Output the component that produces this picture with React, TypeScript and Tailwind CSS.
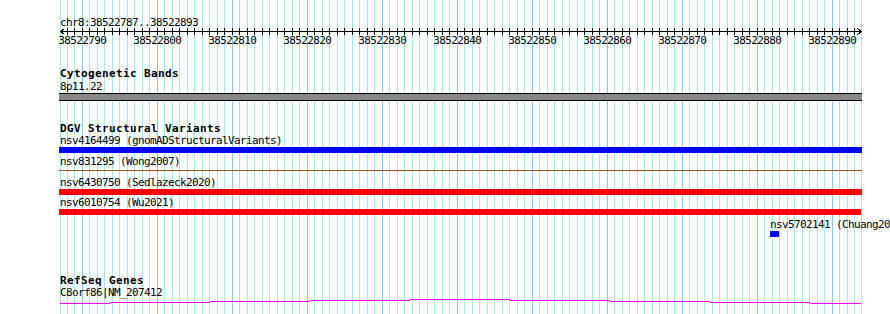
import React from "react";

const row =
  "h-[11px] leading-[11px] text-[11px] tracking-[-0.62px] whitespace-nowrap";
const title =
  "h-[11px] leading-[11px] text-[11px] font-bold tracking-[0.38px] whitespace-nowrap";

function gx(k: number): number {
  if (k === 0) return 60;
  if (k === 107) return 861;
  return Math.floor(59.5 + 7.5 * k);
}

const START = 38522787;

export default function App() {
  const ks = Array.from({ length: 108 }, (_, k) => k);
  const labels = Array.from({ length: 11 }, (_, i) => 38522790 + i * 10);
  const magenta: [number, number, number][] = [
    [60, 110, 5],
    [110, 210, 4],
    [210, 310, 3],
    [310, 410, 2],
    [410, 510, 1],
    [510, 610, 2],
    [610, 710, 3],
    [710, 810, 4],
    [810, 861, 5],
  ];
  return (
    <div className="relative w-[890px] h-[314px] overflow-hidden bg-white text-black font-['DejaVu_Sans_Mono',monospace]">
      <svg
        className="absolute inset-0"
        width={890}
        height={314}
        shapeRendering="crispEdges"
      >
        {ks.map((k) => (
          <rect
            key={k}
            x={gx(k)}
            y={0}
            width={1}
            height={314}
            fill={(k - 3) % 10 === 0 ? "#88c6e8" : "#a8e6ee"}
          />
        ))}
      </svg>

      <div className="relative flex flex-col pt-[17px]">
        <div className={row + " ml-[60px]"}>chr8:38522787..38522893</div>

        <svg width={890} height={19} className="block overflow-visible">
          <rect x={60} y={3} width={801} height={1} fill="#000" shapeRendering="crispEdges" />
          {ks.slice(1, 107).map((k) => (
            <rect
              key={k}
              x={gx(k)}
              y={0}
              width={1}
              height={7}
              fill="#000"
              shapeRendering="crispEdges"
            />
          ))}
          <path
            d="M64.5 0.5 L60.5 3.5 L64.5 6.5"
            stroke="#000"
            fill="none"
            strokeWidth={1}
            shapeRendering="crispEdges"
          />
          <path
            d="M857.5 0.5 L861.5 3.5 L857.5 6.5"
            stroke="#000"
            fill="none"
            strokeWidth={1}
            shapeRendering="crispEdges"
          />
          {labels.map((b) => (
            <text
              key={b}
              x={gx(b - START) + 0.2}
              y={16}
              textAnchor="middle"
              fontFamily="DejaVu Sans Mono, monospace"
              fontSize={11}
              letterSpacing={-0.62}
              fill="#000"
            >
              {b}
            </text>
          ))}
        </svg>

        <div className={title + " ml-[60px] mt-[21px]"}>Cytogenetic Bands</div>
        <div className={row + " ml-[60px] mt-[2px]"}>8p11.22</div>
        <div className="ml-[59px] mt-[1px] w-[803px] h-[8px] bg-[#888888] border-y border-black" />

        <div className={title + " ml-[60px] mt-[22px]"}>DGV Structural Variants</div>
        <div className={row + " ml-[60px] mt-[1px]"}>
          nsv4164499 (gnomADStructuralVariants)
        </div>
        <div className="ml-[59px] mt-[1px] w-[803px] h-[6px] bg-[#0000ff]" />
        <div className={row + " ml-[60px] mt-[3px]"}>nsv831295 (Wong2007)</div>
        <div className="ml-[59px] mt-[3px] w-[803px] h-[1px] bg-[#a0522d]" />
        <div className={row + " ml-[60px] mt-[6px]"}>nsv6430750 (Sedlazeck2020)</div>
        <div className="ml-[59px] mt-[1px] w-[803px] h-[6px] bg-[#ff0000]" />
        <div className={row + " ml-[60px] mt-[2px]"}>nsv6010754 (Wu2021)</div>
        <div className="ml-[59px] mt-[1px] w-[802px] h-[6px] bg-[#ff0000]" />
        <div className={row + " ml-[770px] mt-[4px]"}>nsv5702141 (Chuang20</div>
        <div className="ml-[770px] mt-[1px] w-[9px] h-[6px] bg-[#0000ff]" />

        <div className={title + " ml-[60px] mt-[38px]"}>RefSeq Genes</div>
        <div className={row + " ml-[60px] mt-[1px]"}>C8orf86|NM_207412</div>
        <svg width={890} height={6} className="block" shapeRendering="crispEdges">
          {magenta.map(([a, b, y]) => (
            <rect key={a} x={a} y={y} width={b - a} height={1} fill="#ff00ff" />
          ))}
        </svg>
      </div>
    </div>
  );
}
